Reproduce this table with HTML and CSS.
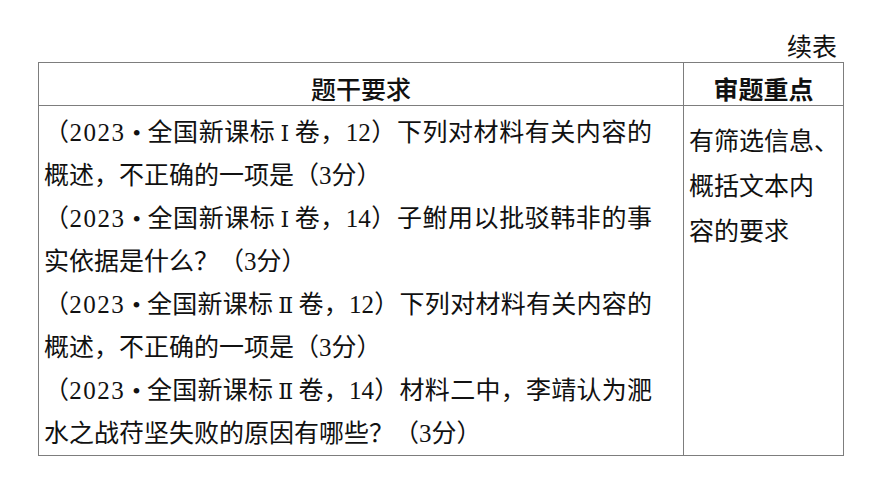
FILE: index.html
```html
<!DOCTYPE html>
<html lang="zh">
<head>
<meta charset="utf-8">
<link rel="stylesheet" href="styles.css">
</head>
<body>
<div class="page">
  <div class="caption">续表</div>
  <table class="grid">
    <thead>
      <tr>
        <th class="col-main">题干要求</th>
        <th class="col-side side-head">审题重点</th>
      </tr>
    </thead>
    <tbody>
      <tr>
        <td class="cell-main">
          <div class="line full">（<span class="num">2023</span><span class="dot">•</span>全国新课标<span class="rn">Ⅰ</span>卷，12）下列对材料有关内容的</div>
          <div class="line">概述，不正确的一项是（3分）</div>
          <div class="line full">（<span class="num">2023</span><span class="dot">•</span>全国新课标<span class="rn">Ⅰ</span>卷，14）子鲋用以批驳韩非的事</div>
          <div class="line">实依据是什么？（3分）</div>
          <div class="line full">（<span class="num">2023</span><span class="dot">•</span>全国新课标<span class="rn">Ⅱ</span>卷，12）下列对材料有关内容的</div>
          <div class="line">概述，不正确的一项是（3分）</div>
          <div class="line full">（<span class="num">2023</span><span class="dot">•</span>全国新课标<span class="rn">Ⅱ</span>卷，14）材料二中，李靖认为淝</div>
          <div class="line">水之战苻坚失败的原因有哪些？（3分）</div>
        </td>
        <td class="cell-side">
          <div class="side-line">有筛选信息、</div>
          <div class="side-line">概括文本内</div>
          <div class="side-line">容的要求</div>
        </td>
      </tr>
    </tbody>
  </table>
</div>
</body>
</html>
```

FILE: styles.css
```css
html, body {
  margin: 0;
  padding: 0;
  background: #ffffff;
}

body {
  font-family: "Liberation Serif", "Noto Sans CJK SC", serif;
  color: #111111;
  font-size: 25px;
}

.page {
  width: 803px;
  padding: 28px 0 0 38px;
}

.caption {
  text-align: right;
  line-height: 34px;
  padding-right: 4px;
  font-family: "Noto Sans CJK SC", sans-serif;
}

.grid {
  border-collapse: collapse;
  width: 803px;
  table-layout: fixed;
}

.grid th,
.grid td {
  border: 1px solid #7d7d7d;
  padding: 0;
}

.grid th {
  font-family: "Noto Sans CJK SC", sans-serif;
  font-weight: 500;
  text-align: center;
  line-height: 32px;
  padding-top: 9px;
  padding-bottom: 1px;
  height: 32px;
  vertical-align: top;
}

.side-head {
  font-weight: 700 !important;
}

.col-main {
  width: 644px;
}

.col-side {
  width: 159px;
}

.cell-main {
  vertical-align: top;
  padding: 5px 0 0 5px !important;
}

.line {
  width: 608px;
  height: 43px;
  line-height: 43px;
  white-space: nowrap;
  overflow: visible;
}

.full {
  text-align: justify;
  text-align-last: justify;
}

.num {
  letter-spacing: 1.5px;
}

.dot {
  font-size: 24px;
  padding: 0 6px 0 7px;
}

.rn {
  font-family: "DejaVu Serif", "Liberation Serif", serif;
  font-size: 22px;
  padding: 0 5px;
}

.cell-side {
  vertical-align: top;
  padding: 11px 0 0 5px !important;
  font-family: "Noto Sans CJK SC", sans-serif;
}

.side-line {
  height: 45px;
  line-height: 45px;
  white-space: nowrap;
}
```
